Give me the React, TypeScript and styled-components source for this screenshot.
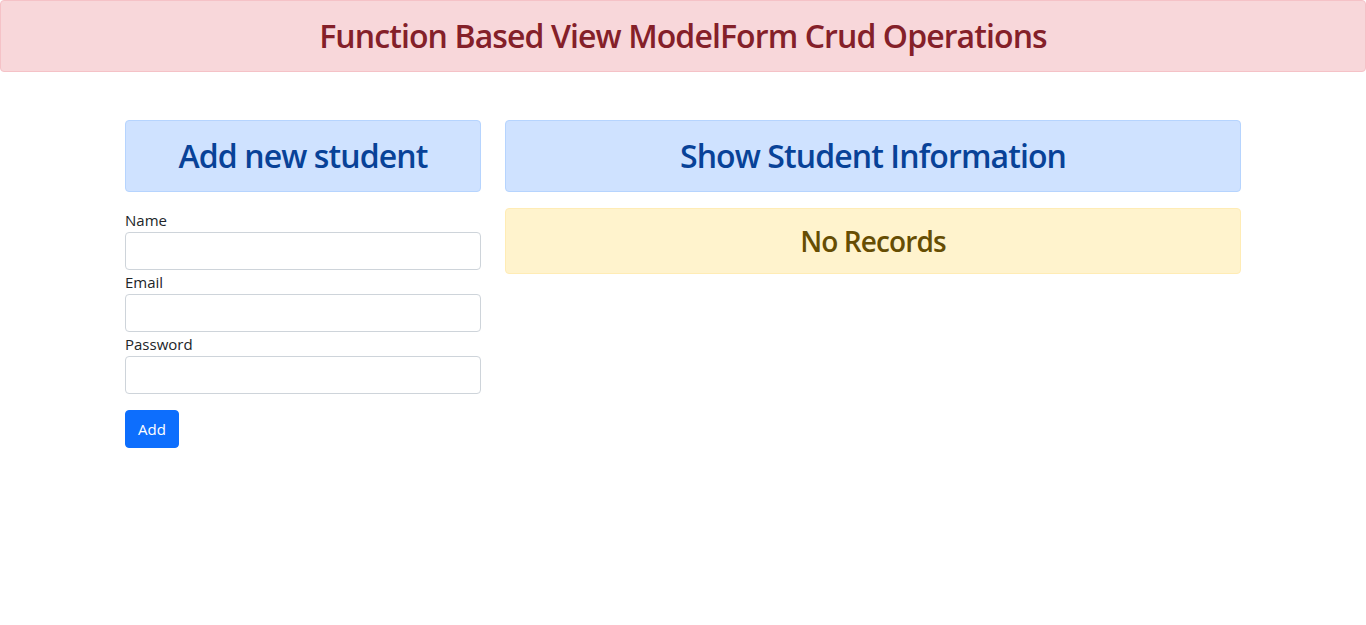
import React from "react";
import styled, { createGlobalStyle } from "styled-components";

const GlobalStyle = createGlobalStyle`
  * { box-sizing: border-box; }
  body {
    margin: 0;
    font-family: "Open Sans", "Noto Sans", sans-serif;
    font-size: 16px;
    line-height: 1.5;
    color: #212529;
    background: #fff;
  }
`;

const palette = {
  danger: { bg: "#f8d7da", border: "#f5c2c7", color: "#842029" },
  primary: { bg: "#cfe2ff", border: "#b6d4fe", color: "#084298" },
  warning: { bg: "#fff3cd", border: "#ffecb5", color: "#664d03" },
};

type Variant = keyof typeof palette;

const Alert = styled.div<{ $variant: Variant; $size?: number; $line?: number }>`
  background-color: ${(p) => palette[p.$variant].bg};
  border: 1px solid ${(p) => palette[p.$variant].border};
  color: ${(p) => palette[p.$variant].color};
  border-radius: 4px;
  padding: 16px;
  margin-bottom: 16px;
  text-align: center;
  font-size: ${(p) => p.$size || 32}px;
  font-weight: 600;
  letter-spacing: -0.9px;
  line-height: ${(p) => p.$line || 38}px;
`;

const Header = styled(Alert)`
  margin-bottom: 0;
`;

const Container = styled.div`
  max-width: 1140px;
  margin: 48px auto 0;
  padding: 0 12px;
`;

const Row = styled.div`
  display: grid;
  grid-template-columns: 356px 1fr;
  column-gap: 24px;
  align-items: start;
`;

const Col = styled.div``;

const Form = styled.form`
  display: flex;
  flex-direction: column;
`;

const Label = styled.label`
  font-size: 15px;
  line-height: 24px;
  display: block;
`;

const Input = styled.input`
  display: block;
  width: 100%;
  height: 38px;
  padding: 6px 12px;
  font-size: 16px;
  border: 1px solid #ced4da;
  border-radius: 4px;
  background: #fff;
  outline: none;
`;

const Button = styled.button`
  align-self: flex-start;
  margin-top: 16px;
  height: 38px;
  padding: 6px 12px;
  font-family: inherit;
  font-size: 15px;
  color: #fff;
  background-color: #0d6efd;
  border: 1px solid #0d6efd;
  border-radius: 4px;
  cursor: pointer;
`;

const fields = [
  { name: "Name", type: "text" },
  { name: "Email", type: "email" },
  { name: "Password", type: "password" },
];

const App = () => {
  return (
    <>
      <GlobalStyle />
      <Header $variant="danger">Function Based View ModelForm Crud Operations</Header>
      <Container>
        <Row>
          <Col>
            <Alert $variant="primary">Add new student</Alert>
            <Form onSubmit={(e) => e.preventDefault()}>
              {fields.map((f) => (
                <div key={f.name}>
                  <Label htmlFor={f.name}>{f.name}</Label>
                  <Input id={f.name} type={f.type} />
                </div>
              ))}
              <Button type="submit">Add</Button>
            </Form>
          </Col>
          <Col>
            <Alert $variant="primary">Show Student Information</Alert>
            <Alert $variant="warning" $size={28} $line={32}>No Records</Alert>
          </Col>
        </Row>
      </Container>
    </>
  );
};

export default App;
